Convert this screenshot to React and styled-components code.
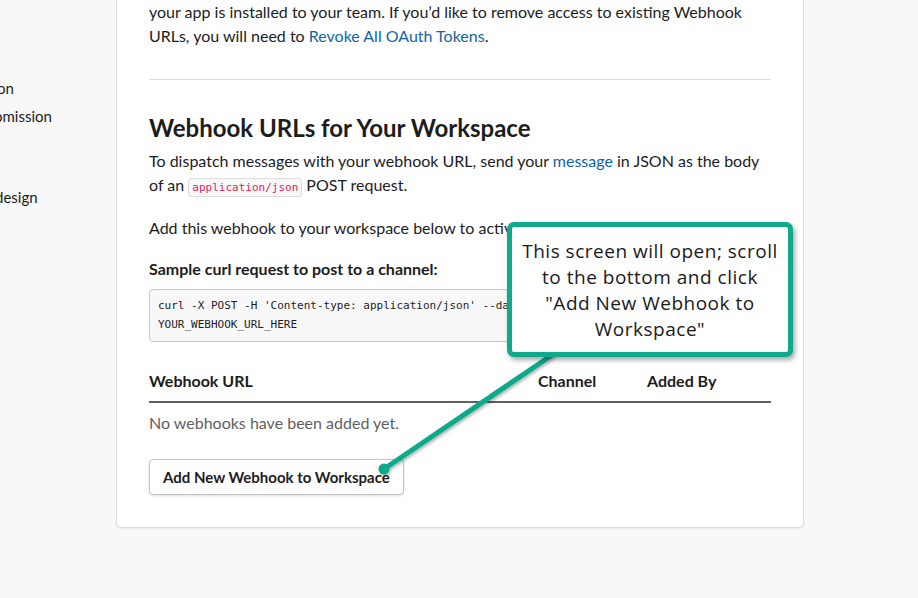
import styled, { createGlobalStyle } from "styled-components";

const GlobalStyle = createGlobalStyle`
  html, body {
    margin: 0;
    padding: 0;
    background: #f8f8f8;
    overflow: hidden;
  }
  * {
    box-sizing: border-box;
  }
`;

const Page = styled.div`
  position: relative;
  width: 918px;
  height: 598px;
  overflow: hidden;
  display: flex;
  align-items: flex-start;
  font-family: Lato, "Liberation Sans", sans-serif;
  font-size: 16px;
  color: #1d1c1d;
`;

const Sidebar = styled.nav`
  width: 116px;
  flex: none;
  display: flex;
  flex-direction: column;
  padding-top: 76px;
  overflow: hidden;
`;

const NavItem = styled.div`
  line-height: 24px;
  height: 28px;
  white-space: nowrap;
  font-size: 15px;
  margin-top: ${(p) => p.$gap || 0}px;
  margin-left: ${(p) => p.$shift || 0}px;
`;

const Card = styled.main`
  width: 688px;
  flex: none;
  margin-top: -12px;
  padding: 11px 32px 32px;
  background: #fff;
  border: 1px solid #dddddd;
  border-radius: 5px;
  box-shadow: 0 1px 2px rgba(0, 0, 0, 0.06);
`;

const Text = styled.p`
  margin: ${(p) => p.$top || 0}px 0 0;
  line-height: 24px;
  color: ${(p) => (p.$muted ? "#616061" : "#1d1c1d")};
`;

const Link = styled.a`
  color: #1264a3;
  text-decoration: none;
`;

const Rule = styled.hr`
  border: none;
  border-top: 1px solid #dddddd;
  margin: 31px 0 0;
`;

const Heading = styled.h2`
  margin: 32px 0 0;
  font-size: 24px;
  line-height: 32px;
  font-weight: 700;
`;

const InlineCode = styled.code`
  font-family: "DejaVu Sans Mono", "Liberation Mono", monospace;
  font-size: 11px;
  color: #e01e5a;
  background: #f8f8f8;
  border: 1px solid #dddddd;
  border-radius: 3px;
  padding: 2px 3px;
`;

const SubHeading = styled.h4`
  margin: 17px 0 0;
  font-size: 16px;
  line-height: 24px;
  font-weight: 700;
`;

const CodeBlock = styled.pre`
  margin: 8px 0 0;
  padding: 6px 8px 7px;
  background: #f8f8f8;
  border: 1px solid #c7c7c7;
  border-radius: 4px;
  font-family: "DejaVu Sans Mono", "Liberation Mono", monospace;
  font-size: 11px;
  line-height: 19px;
  color: #1d1c1d;
  white-space: pre;
  overflow: hidden;
`;

const Table = styled.div`
  margin-top: 27px;
`;

const HeaderRow = styled.div`
  display: grid;
  grid-template-columns: 389px 109px 1fr;
  padding-bottom: 8px;
  border-bottom: 2px solid #616061;
  font-weight: 700;
  line-height: 24px;
`;

const EmptyRow = styled(Text)`
  margin-top: 8px;
`;

const Button = styled.button`
  margin-top: 24px;
  height: 36px;
  padding: 0 13px;
  font-family: Lato, "Liberation Sans", sans-serif;
  font-size: 15px;
  font-weight: 700;
  color: #1d1c1d;
  background: #fff;
  border: 1px solid #c2c2c2;
  border-radius: 4px;
  box-shadow: 0 1px 3px rgba(0, 0, 0, 0.12);
`;

const Annotation = styled.svg`
  position: absolute;
  left: 0;
  top: 0;
  pointer-events: none;
`;

const Callout = styled.div`
  position: absolute;
  left: 507px;
  top: 222px;
  width: 286px;
  height: 135px;
  border: 5px solid #10a98b;
  border-radius: 7px;
  background: #fff;
  box-shadow: 2px 3px 5px rgba(0, 0, 0, 0.35);
  display: flex;
  align-items: center;
  justify-content: center;
  text-align: center;
  font-family: "Open Sans", "Noto Sans", sans-serif;
  font-size: 19px;
  letter-spacing: 0.5px;
  line-height: 26px;
  color: #1a1a1a;
  white-space: nowrap;
`;

export default function App() {
  return (
    <Page>
      <GlobalStyle />
      <Sidebar>
        <NavItem $shift={-3}>on</NavItem>
        <NavItem $shift={-6}>omission</NavItem>
        <NavItem $gap={53} $shift={-5}>design</NavItem>
      </Sidebar>
      <Card>
        <Text>
          your app is installed to your team. If you’d like to remove access to
          existing Webhook URLs, you will need to{" "}
          <Link>Revoke All OAuth Tokens</Link>.
        </Text>
        <Rule />
        <Heading>Webhook URLs for Your Workspace</Heading>
        <Text $top={5}>
          To dispatch messages with your webhook URL, send your{" "}
          <Link>message</Link> in JSON as the body of an{" "}
          <InlineCode>application/json</InlineCode> POST request.
        </Text>
        <Text $top={16}>
          Add this webhook to your workspace below to activate this curl
          example.
        </Text>
        <SubHeading>Sample curl request to post to a channel:</SubHeading>
        <CodeBlock>
          {`curl -X POST -H 'Content-type: application/json' --data '{"text":"Hello, World!"}'\nYOUR_WEBHOOK_URL_HERE`}
        </CodeBlock>
        <Table>
          <HeaderRow>
            <span>Webhook URL</span>
            <span>Channel</span>
            <span>Added By</span>
          </HeaderRow>
          <EmptyRow $muted>No webhooks have been added yet.</EmptyRow>
        </Table>
        <Button>Add New Webhook to Workspace</Button>
      </Card>
      <Annotation width="918" height="598">
        <defs>
          <filter id="sh" x="-20%" y="-20%" width="140%" height="140%">
            <feDropShadow dx="1" dy="2" stdDeviation="1.5" floodOpacity="0.3" />
          </filter>
        </defs>
        <g filter="url(#sh)">
          <line x1="552" y1="355" x2="384" y2="469" stroke="#10a98b" strokeWidth="5" strokeLinecap="round" />
          <circle cx="384" cy="469" r="5.5" fill="#10a98b" />
        </g>
      </Annotation>
      <Callout>
        This screen will open; scroll
        <br />
        to the bottom and click
        <br />
        "Add New Webhook to
        <br />
        Workspace"
      </Callout>
    </Page>
  );
}
